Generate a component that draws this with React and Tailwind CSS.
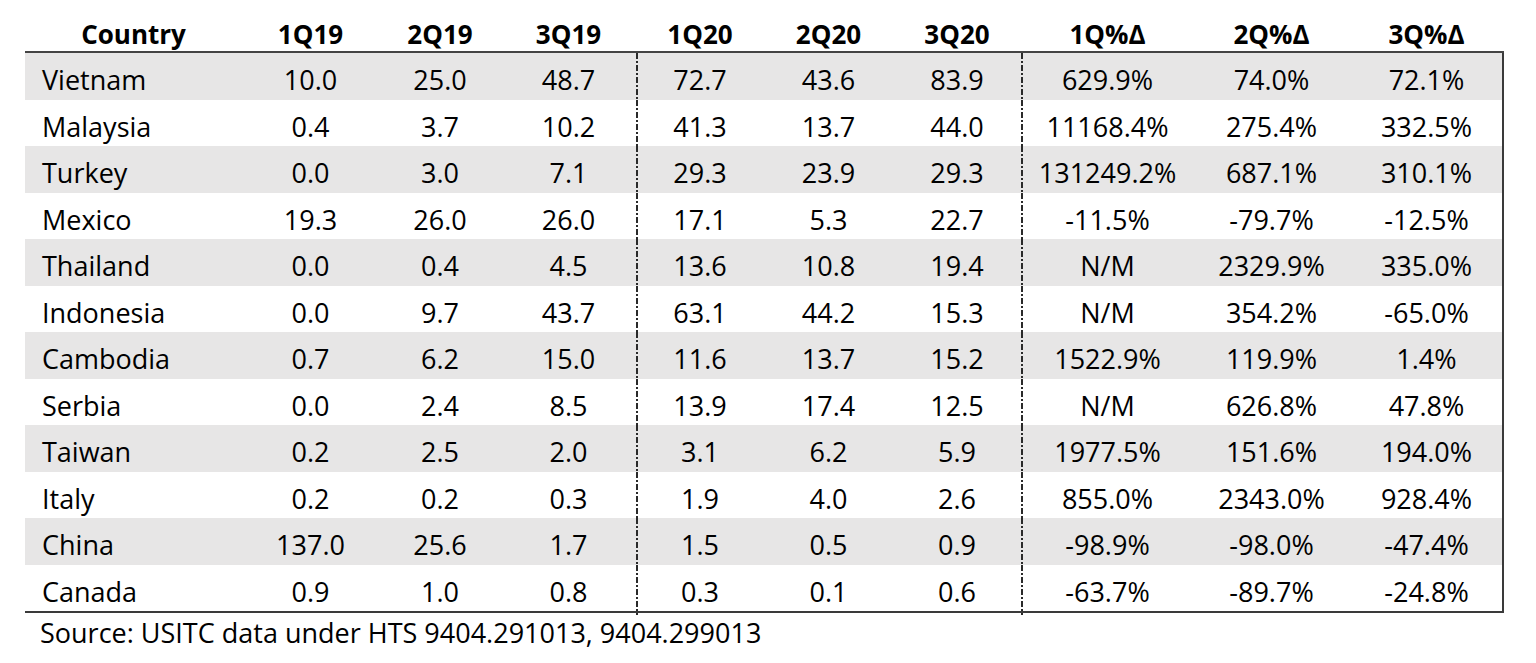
const rows = [
  ['Vietnam', '10.0', '25.0', '48.7', '72.7', '43.6', '83.9', '629.9%', '74.0%', '72.1%'],
  ['Malaysia', '0.4', '3.7', '10.2', '41.3', '13.7', '44.0', '11168.4%', '275.4%', '332.5%'],
  ['Turkey', '0.0', '3.0', '7.1', '29.3', '23.9', '29.3', '131249.2%', '687.1%', '310.1%'],
  ['Mexico', '19.3', '26.0', '26.0', '17.1', '5.3', '22.7', '-11.5%', '-79.7%', '-12.5%'],
  ['Thailand', '0.0', '0.4', '4.5', '13.6', '10.8', '19.4', 'N/M', '2329.9%', '335.0%'],
  ['Indonesia', '0.0', '9.7', '43.7', '63.1', '44.2', '15.3', 'N/M', '354.2%', '-65.0%'],
  ['Cambodia', '0.7', '6.2', '15.0', '11.6', '13.7', '15.2', '1522.9%', '119.9%', '1.4%'],
  ['Serbia', '0.0', '2.4', '8.5', '13.9', '17.4', '12.5', 'N/M', '626.8%', '47.8%'],
  ['Taiwan', '0.2', '2.5', '2.0', '3.1', '6.2', '5.9', '1977.5%', '151.6%', '194.0%'],
  ['Italy', '0.2', '0.2', '0.3', '1.9', '4.0', '2.6', '855.0%', '2343.0%', '928.4%'],
  ['China', '137.0', '25.6', '1.7', '1.5', '0.5', '0.9', '-98.9%', '-98.0%', '-47.4%'],
  ['Canada', '0.9', '1.0', '0.8', '0.3', '0.1', '0.6', '-63.7%', '-89.7%', '-24.8%'],
];

const headers = ['Country', '1Q19', '2Q19', '3Q19', '1Q20', '2Q20', '3Q20', '1Q%Δ', '2Q%Δ', '3Q%Δ'];

const grid = 'grid grid-cols-[217px_137px_122px_135px_128px_129px_128px_173px_155px_155px]';

// dash-dot separator like Excel's border style
const dashDot =
  'bg-[image:repeating-linear-gradient(to_bottom,#2a2a2a_0_6px,transparent_6px_8px,#2a2a2a_8px_10px,transparent_10px_12px)] bg-no-repeat bg-left bg-[length:2px_100%]';

export default function App() {
  return (
    <div className="w-[1536px] h-[663px] bg-white text-black font-['Open_Sans',sans-serif] overflow-hidden">
      <div className="ml-[25px] mt-[15px] w-[1479px]">
        {/* header */}
        <div className={`${grid} h-[38px] border-b-2 border-[#444] font-bold text-[26px] leading-[38px]`}>
          {headers.map((h) => (
            <div key={h} className="text-center">
              {h}
            </div>
          ))}
        </div>

        {/* body */}
        <div className="border-r-2 border-b-2 border-[#3a3a3a]">
          {rows.map((r, i) => (
            <div
              key={r[0]}
              className={`${grid} h-[46.5px] text-[27px] leading-[46.5px] ${i % 2 === 0 ? 'bg-[#e7e6e6]' : 'bg-white'}`}
            >
              {r.map((cell, j) => (
                <div
                  key={j}
                  className={`pt-[4px] ${j === 0 ? 'pl-[17px] text-left' : 'text-center'} ${
                    j === 4 || j === 7 ? dashDot : ''
                  }`}
                >
                  {cell}
                </div>
              ))}
            </div>
          ))}
        </div>

        <div className="ml-[15px] mt-[1px] text-[27px] leading-[38px]">
          Source: USITC data under HTS 9404.291013, 9404.299013
        </div>
      </div>
    </div>
  );
}
